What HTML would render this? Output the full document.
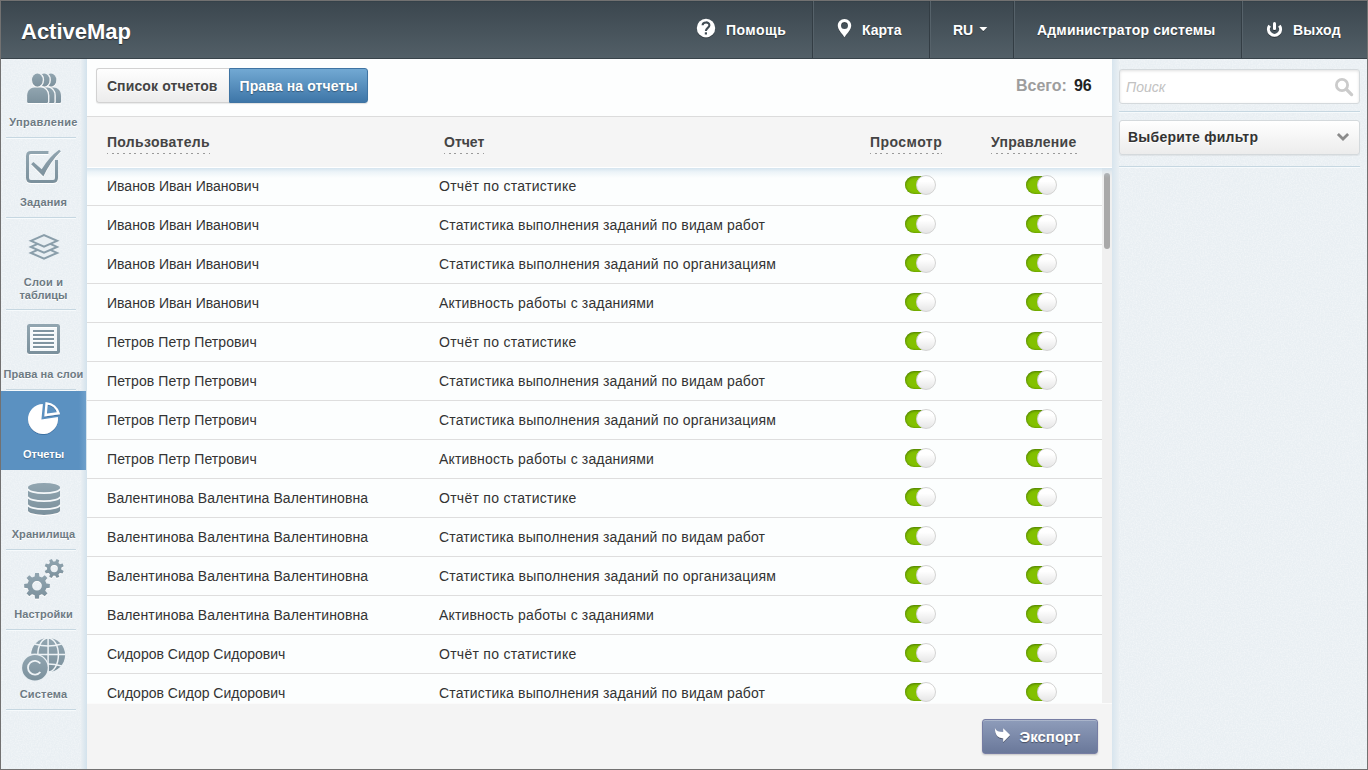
<!DOCTYPE html>
<html lang="ru">
<head>
<meta charset="utf-8">
<title>ActiveMap</title>
<style>
*{box-sizing:border-box;margin:0;padding:0}
html,body{width:1368px;height:770px;overflow:hidden;background:#727171;font-family:"Liberation Sans",sans-serif;}
#app{position:absolute;left:1px;top:1px;width:1366px;height:768px;overflow:hidden;background:#e9eff3}
.abs{position:absolute}
/* header */
#hdr{position:absolute;left:0;top:0;width:1366px;height:58px;background:linear-gradient(#3b464e,#525f67);border-bottom:1px solid #38434a;box-shadow:inset 0 1px 0 #36424a}
#logo{position:absolute;left:20px;top:18px;font-weight:bold;font-size:22px;line-height:26px;color:#fff;text-shadow:0 1px 1px rgba(0,0,0,.5);white-space:nowrap}
.nsep{position:absolute;top:0;width:2px;height:57px;border-left:1px solid #333d44;border-right:1px solid #56626a}
.ntx{position:absolute;top:20px;font-weight:bold;font-size:14px;line-height:18px;color:#fff;white-space:nowrap;text-shadow:0 1px 1px rgba(0,0,0,.4)}
/* sidebar */
#side{position:absolute;left:0;top:58px;width:86px;height:710px;background:linear-gradient(90deg,#e9eff3 0,#e9eff3 80px,#d3e2ec 86px)}
.sl{position:absolute;left:0;width:85px;text-align:center;font-weight:bold;font-size:11px;line-height:13px;color:#6d7a83;text-shadow:0 1px 0 #fff;letter-spacing:.35px;white-space:nowrap}
.ss{position:absolute;left:5px;width:70px;height:2px;border-top:1px solid #c6d7e1;border-bottom:1px solid #f6fafc}
#act{position:absolute;left:0;top:332px;width:85px;height:79px;background:linear-gradient(90deg,#5b91c1 0,#5b91c1 78px,#6ea0cb 85px)}
/* main */
#main{position:absolute;left:86px;top:58px;width:1025px;height:710px;background:#fdfefe}
#rp{position:absolute;left:1111px;top:58px;width:255px;height:710px;background:linear-gradient(90deg,#d8e5ee 0,#e9eff3 7px)}

/* tabs */
.tab{position:absolute;top:67px;height:35px;font-weight:bold;font-size:14px;line-height:35px;white-space:nowrap;text-align:center;letter-spacing:.12px}
#tab1{left:95px;width:133px;padding-right:1.5px;color:#444;background:linear-gradient(#fefefe,#ececec);border:1px solid #d2d2d2;border-right:0;border-radius:3px 0 0 3px;text-shadow:0 1px 0 #fff;box-shadow:0 1px 1px rgba(0,0,0,.08)}
#tab2{left:228px;width:139px;color:#fff;background:linear-gradient(#72a9d3,#3e76a8);border:1px solid #3f74a3;border-radius:0 3px 3px 0;text-shadow:0 1px 1px rgba(0,0,0,.35);box-shadow:0 1px 1px rgba(0,0,0,.12)}
#tot{position:absolute;top:75px;left:1015px;font-weight:bold;font-size:16px;line-height:20px;color:#9d9d9d;white-space:nowrap}
#tot b{color:#222;margin-left:7px}
/* table */
#thead{position:absolute;left:86px;top:115px;width:1025px;height:52px;border-top:1px solid #dcdcdc;background:#f5f5f5;border-bottom:1px solid #fff;z-index:3}
#tsh{position:absolute;left:86px;top:167px;width:1025px;height:10px;background:linear-gradient(rgba(200,220,234,.75),rgba(200,220,234,.3) 40%,rgba(200,220,234,0));z-index:3}
.th{position:absolute;top:132px;font-weight:bold;font-size:14px;line-height:18px;color:#444;white-space:nowrap;padding-bottom:3px;background:linear-gradient(#9a9a9a,#9a9a9a) 100% 100%/1px 1px no-repeat,repeating-linear-gradient(90deg,#9a9a9a 0,#9a9a9a 2px,transparent 2px,transparent 5.7px) -1px 100%/calc(100% + 1px) 1px no-repeat;z-index:4}
#rows{position:absolute;left:86px;top:166px;width:1015px;height:536px;overflow:hidden;background:#fcfefe}
.r{position:relative;height:39px;border-bottom:1px solid #dedede}
.r span{position:absolute;top:10px;font-size:14px;line-height:18px;color:#333;white-space:nowrap}
.r .u{left:20px}.r .p{left:352px}
.tg{position:absolute;top:8px;width:31px;height:20px}
.tg i{position:absolute;left:0;top:1px;width:30px;height:18px;border-radius:9px;background:#83c100;box-shadow:inset 0 1px 3px rgba(50,90,0,.6),inset 0 0 2px rgba(50,90,0,.45)}
.tg b{position:absolute;left:11px;top:0;width:20px;height:20px;border-radius:10px;border:1px solid #d4d4d4;background:linear-gradient(#fff 30%,#e6e6e6)}
.t1{left:818px}.t2{left:939px}
#strack{position:absolute;left:1101px;top:167px;width:10px;height:536px;background:#f0f0f0}
#sthumb{position:absolute;left:1103px;top:172px;width:6px;height:76px;border-radius:3px;background:#a9a9a9}
#foot{position:absolute;left:86px;top:702px;width:1025px;height:66px;background:#f4f4f4;border-top:1px solid #fbfbfb;z-index:3}
#exp{position:absolute;left:981px;top:718px;width:116px;height:35px;border:1px solid #767da3;border-radius:3px;background:linear-gradient(#8e9cba,#6a789a);box-shadow:inset 0 1px 0 rgba(255,255,255,.25),0 1px 2px rgba(0,0,0,.2);z-index:4}
#exp span{position:absolute;left:36.5px;top:6.5px;font-weight:bold;font-size:15px;line-height:19px;color:#fff;text-shadow:0 1px 1px rgba(0,0,0,.4);white-space:nowrap}
/* right panel */
.box{position:absolute;left:1118px;width:241px;height:35px;border:1px solid #d4d9dc;border-radius:3px}
#srch{top:68px;background:#fff;box-shadow:inset 0 1px 3px rgba(0,0,0,.12)}
#srch span{position:absolute;left:6px;top:8px;font-style:italic;font-size:14px;line-height:18px;color:#c2c2c2}
#flt{top:119px;background:linear-gradient(#fff,#ececec);box-shadow:0 1px 1px rgba(0,0,0,.06)}
#flt span{position:absolute;left:8px;top:7px;font-weight:bold;font-size:14px;line-height:18px;color:#333;text-shadow:0 1px 0 #fff;white-space:nowrap;letter-spacing:.23px}
.rs{position:absolute;left:1118px;width:241px;height:2px;border-top:1px solid #c6d7e1;border-bottom:1px solid #f6fafc}
.nz{position:absolute;filter:url(#nz);background:#fff;opacity:.45}
</style>
</head>
<body>
<div id="app">
<div id="hdr">
  <div id="logo">ActiveMap</div>

  <div class="nsep" style="left:811px"></div>
  <div class="nsep" style="left:928px"></div>
  <div class="nsep" style="left:1012px"></div>
  <div class="nsep" style="left:1240px"></div>
  <div class="ntx" style="left:725px;letter-spacing:.44px">Помощь</div>
  <div class="ntx" style="left:861px">Карта</div>
  <div class="ntx" style="left:952px">RU</div>
  <div class="ntx" style="left:1036px;letter-spacing:.18px">Администратор системы</div>
  <div class="ntx" style="left:1292px;letter-spacing:.2px">Выход</div>
</div>
<svg width="0" height="0" style="position:absolute"><filter id="nz" x="0" y="0" width="100%" height="100%"><feTurbulence type="fractalNoise" baseFrequency=".75" numOctaves="2" seed="3" result="t"/><feColorMatrix type="matrix" values="0 0 0 0 1  0 0 0 0 1  0 0 0 0 1  1.6 0 0 0 -.55"/></filter></svg>
<div id="side">
<div class="nz" style="left:0;top:0;width:80px;height:710px"></div>
<div id="act"></div>
<div class="sl" style="top:57px">Управление</div>
<div class="ss" style="top:78px"></div>
<div class="sl" style="top:137px;letter-spacing:0.15px">Задания</div>
<div class="ss" style="top:158px"></div>
<div class="sl" style="top:217px"><span style="letter-spacing:.2px">Слои и</span><br><span style="letter-spacing:.02px">таблицы</span></div>
<div class="ss" style="top:250px"></div>
<div class="sl" style="top:309px;letter-spacing:0.08px">Права на слои</div>
<div class="ss" style="top:330px"></div>
<div class="sl" style="top:389px;color:#fff;text-shadow:0 1px 1px rgba(0,0,0,.3);letter-spacing:0px">Отчеты</div>
<div class="sl" style="top:469px;letter-spacing:0.08px">Хранилища</div>
<div class="ss" style="top:490px"></div>
<div class="sl" style="top:549px;letter-spacing:0.04px">Настройки</div>
<div class="ss" style="top:570px"></div>
<div class="sl" style="top:629px;letter-spacing:0.18px">Система</div>
<div class="ss" style="top:650px"></div>
</div>
<div id="main"></div>
<div id="rp"></div>
<div class="nz" style="left:1118px;top:58px;width:248px;height:710px"></div>

<div id="tab1" class="tab">Список отчетов</div>
<div id="tab2" class="tab">Права на отчеты</div>
<div id="tot">Всего:<b>96</b></div>
<div id="thead"></div><div id="tsh"></div>
<div class="th" style="left:106px;letter-spacing:.3px">Пользователь</div>
<div class="th" style="left:443px">Отчет</div>
<div class="th" style="left:869px;letter-spacing:.45px">Просмотр</div>
<div class="th" style="left:990px;letter-spacing:.28px">Управление</div>
<div id="rows">
<div class="r"><span class="u">Иванов Иван Иванович</span><span class="p" style="letter-spacing:0.28px">Отчёт по статистике</span><div class="tg t1"><i></i><b></b></div><div class="tg t2"><i></i><b></b></div></div>
<div class="r"><span class="u">Иванов Иван Иванович</span><span class="p" style="letter-spacing:0.15px">Статистика выполнения заданий по видам работ</span><div class="tg t1"><i></i><b></b></div><div class="tg t2"><i></i><b></b></div></div>
<div class="r"><span class="u">Иванов Иван Иванович</span><span class="p" style="letter-spacing:0.195px">Статистика выполнения заданий по организациям</span><div class="tg t1"><i></i><b></b></div><div class="tg t2"><i></i><b></b></div></div>
<div class="r"><span class="u">Иванов Иван Иванович</span><span class="p" style="letter-spacing:0.155px">Активность работы с заданиями</span><div class="tg t1"><i></i><b></b></div><div class="tg t2"><i></i><b></b></div></div>
<div class="r"><span class="u" style="letter-spacing:0.09px">Петров Петр Петрович</span><span class="p" style="letter-spacing:0.28px">Отчёт по статистике</span><div class="tg t1"><i></i><b></b></div><div class="tg t2"><i></i><b></b></div></div>
<div class="r"><span class="u" style="letter-spacing:0.09px">Петров Петр Петрович</span><span class="p" style="letter-spacing:0.15px">Статистика выполнения заданий по видам работ</span><div class="tg t1"><i></i><b></b></div><div class="tg t2"><i></i><b></b></div></div>
<div class="r"><span class="u" style="letter-spacing:0.09px">Петров Петр Петрович</span><span class="p" style="letter-spacing:0.195px">Статистика выполнения заданий по организациям</span><div class="tg t1"><i></i><b></b></div><div class="tg t2"><i></i><b></b></div></div>
<div class="r"><span class="u" style="letter-spacing:0.09px">Петров Петр Петрович</span><span class="p" style="letter-spacing:0.155px">Активность работы с заданиями</span><div class="tg t1"><i></i><b></b></div><div class="tg t2"><i></i><b></b></div></div>
<div class="r"><span class="u" style="letter-spacing:0.11px">Валентинова Валентина Валентиновна</span><span class="p" style="letter-spacing:0.28px">Отчёт по статистике</span><div class="tg t1"><i></i><b></b></div><div class="tg t2"><i></i><b></b></div></div>
<div class="r"><span class="u" style="letter-spacing:0.11px">Валентинова Валентина Валентиновна</span><span class="p" style="letter-spacing:0.15px">Статистика выполнения заданий по видам работ</span><div class="tg t1"><i></i><b></b></div><div class="tg t2"><i></i><b></b></div></div>
<div class="r"><span class="u" style="letter-spacing:0.11px">Валентинова Валентина Валентиновна</span><span class="p" style="letter-spacing:0.195px">Статистика выполнения заданий по организациям</span><div class="tg t1"><i></i><b></b></div><div class="tg t2"><i></i><b></b></div></div>
<div class="r"><span class="u" style="letter-spacing:0.11px">Валентинова Валентина Валентиновна</span><span class="p" style="letter-spacing:0.155px">Активность работы с заданиями</span><div class="tg t1"><i></i><b></b></div><div class="tg t2"><i></i><b></b></div></div>
<div class="r"><span class="u">Сидоров Сидор Сидорович</span><span class="p" style="letter-spacing:0.28px">Отчёт по статистике</span><div class="tg t1"><i></i><b></b></div><div class="tg t2"><i></i><b></b></div></div>
<div class="r"><span class="u">Сидоров Сидор Сидорович</span><span class="p" style="letter-spacing:0.15px">Статистика выполнения заданий по видам работ</span><div class="tg t1"><i></i><b></b></div><div class="tg t2"><i></i><b></b></div></div>
</div>
<div id="strack"></div><div id="sthumb"></div>
<div id="foot"></div>
<div id="exp"><span>Экспорт</span></div>
<div id="srch" class="box"><span>Поиск</span></div>
<div class="rs" style="top:110px"></div>
<div id="flt" class="box"><span>Выберите фильтр</span></div>
<div class="rs" style="top:165px"></div>
<svg id="ico" width="1366" height="768" viewBox="1 1 1366 768" style="position:absolute;left:0;top:0;z-index:6;pointer-events:none">
<defs><linearGradient id="ig" x1="0" y1="0" x2="0" y2="1"><stop offset="0" stop-color="#91a5b0"/><stop offset="1" stop-color="#7c919d"/></linearGradient><filter id="ws" x="-10%" y="-10%" width="120%" height="130%"><feDropShadow dx="0" dy="1" stdDeviation="0" flood-color="#fff" flood-opacity="1"/></filter><filter id="ds" x="-10%" y="-10%" width="120%" height="130%"><feDropShadow dx="0" dy="1" stdDeviation="0.4" flood-color="#2f6597" flood-opacity=".7"/></filter><filter id="hs" x="-10%" y="-10%" width="120%" height="130%"><feDropShadow dx="0" dy="1" stdDeviation="0.5" flood-color="#000" flood-opacity=".45"/></filter></defs>
<g filter="url(#hs)">
<circle cx="706" cy="28" r="9.2" fill="#fff"/>
</g>
<path d="M702.6 25.2 C702.6 21.6 709.4 21.4 709.4 25.2 C709.4 27.8 705.9 27.9 705.9 30.9" fill="none" stroke="#414c54" stroke-width="2.1"/><rect x="704.8" y="32.3" width="2.2" height="2.2" fill="#414c54"/>
<g filter="url(#hs)" fill="#fff">
<path fill-rule="evenodd" d="M844.5 19 C848.3 19 851.2 22 851.2 25.6 C851.2 29.6 846.8 33.5 844.5 37.3 C842.2 33.5 837.8 29.6 837.8 25.6 C837.8 22 840.7 19 844.5 19 Z M844.5 22 A3.5 3.5 0 1 0 844.5 29 A3.5 3.5 0 1 0 844.5 22 Z"/>
<path d="M979.3 27 L987.3 27 L983.3 31 Z"/>
<path d="M1269.6 25.6 A6.05 6.05 0 1 0 1279.4 25.6" fill="none" stroke="#fff" stroke-width="3"/>
<rect x="1273" y="22" width="3" height="8" rx="1.5"/>
</g>
<g fill="none" stroke="#cbcbcb"><circle cx="1342" cy="85" r="5.6" stroke-width="2.8"/><path d="M1346.4 89.4 L1351.6 94.6" stroke-width="3.3" stroke-linecap="round"/></g>
<path d="M1337.9 134 L1343 139 L1348.1 134" fill="none" stroke="#8b8b8b" stroke-width="2.8"/>
<path filter="url(#hs)" fill="#fff" d="M994.9 728 C996 731 999 732 1003.2 732 L1003.2 728.2 L1010.1 735 L1003.2 742 L1003.2 738.2 C998 738.2 995 735 994.9 728 Z"/>
<g fill="url(#ig)" filter="url(#ws)">
<mask id="m2" maskUnits="userSpaceOnUse" x="0" y="0" width="100" height="200"><rect x="0" y="0" width="100" height="200" fill="#fff"/><g fill="#000" stroke="#000" stroke-width="2.6"><ellipse cx="44.16" cy="80.1" rx="5.45" ry="6.6"/><path d="M33.6 101.9 L33.6 95.60000000000001 C33.6 90.4 37.2 87.4 41.0 87.4 L47.1 87.4 C50.9 87.4 54.5 90.4 54.5 95.60000000000001 L54.5 101.9 Q54.5 102.9 53.5 102.9 L34.6 102.9 Q33.6 102.9 33.6 101.9 Z"/></g></mask>
<mask id="m1" maskUnits="userSpaceOnUse" x="0" y="0" width="100" height="200"><rect x="0" y="0" width="100" height="200" fill="#fff"/><g fill="#000" stroke="#000" stroke-width="2.6"><ellipse cx="37.4" cy="80.1" rx="5.45" ry="6.6"/><path d="M27.1 101.9 L27.1 95.60000000000001 C27.1 90.4 30.700000000000003 87.4 34.5 87.4 L40.6 87.4 C44.4 87.4 48 90.4 48 95.60000000000001 L48 101.9 Q48 102.9 47 102.9 L28.1 102.9 Q27.1 102.9 27.1 101.9 Z"/></g></mask>
<g mask="url(#m2)"><ellipse cx="50.92" cy="80.1" rx="5.45" ry="6.6"/><path d="M40.1 101.9 L40.1 95.60000000000001 C40.1 90.4 43.7 87.4 47.5 87.4 L53.6 87.4 C57.4 87.4 61 90.4 61 95.60000000000001 L61 101.9 Q61 102.9 60 102.9 L41.1 102.9 Q40.1 102.9 40.1 101.9 Z"/></g><g mask="url(#m1)"><ellipse cx="44.16" cy="80.1" rx="5.45" ry="6.6"/><path d="M33.6 101.9 L33.6 95.60000000000001 C33.6 90.4 37.2 87.4 41.0 87.4 L47.1 87.4 C50.9 87.4 54.5 90.4 54.5 95.60000000000001 L54.5 101.9 Q54.5 102.9 53.5 102.9 L34.6 102.9 Q33.6 102.9 33.6 101.9 Z"/></g><g><ellipse cx="37.4" cy="80.1" rx="5.45" ry="6.6"/><path d="M27.1 101.9 L27.1 95.60000000000001 C27.1 90.4 30.700000000000003 87.4 34.5 87.4 L40.6 87.4 C44.4 87.4 48 90.4 48 95.60000000000001 L48 101.9 Q48 102.9 47 102.9 L28.1 102.9 Q27.1 102.9 27.1 101.9 Z"/></g>
</g>
<g fill="url(#ig)" filter="url(#ws)">
<path d="M48.5 152.4 L31 152.4 Q27.5 152.4 27.5 155.9 L27.5 178.1 Q27.5 181.6 31 181.6 L53 181.6 Q56.5 181.6 56.5 178.1 L56.5 160" fill="none" stroke="url(#ig)" stroke-width="3"/>
<path d="M31.1 164.3 L33.4 162 L41.7 169.2 Q49 157 59.1 149.7 L60.9 151.2 Q50 162 43.4 176.6 Z"/>
</g>
<g fill="#e9eff3" stroke="#8a9eaa" stroke-width="2" stroke-linejoin="miter">
<path d="M30.9 252.9 L44 247.1 L57.1 252.9 L44 258.7 Z"/>
<path d="M30.9 246.9 L44 241.1 L57.1 246.9 L44 252.70000000000002 Z"/>
<path d="M30.9 240.8 L44 235.0 L57.1 240.8 L44 246.60000000000002 Z"/>
</g>
<rect x="29" y="326" width="29" height="26" fill="#f4f8fa"/><g filter="url(#ws)"><rect x="28.5" y="325.5" width="30" height="27" rx="1" fill="none" stroke="url(#ig)" stroke-width="3"/>
<rect x="33" y="330" width="21" height="2" fill="#8095a1"/>
<rect x="33" y="334" width="21" height="2" fill="#8095a1"/>
<rect x="33" y="338" width="21" height="2" fill="#8095a1"/>
<rect x="33" y="342" width="21" height="2" fill="#8095a1"/>
<rect x="33" y="346" width="21" height="2" fill="#8095a1"/>
</g>
<g filter="url(#ds)">
<path fill="#fff" d="M41.4 419.4 L42.9 404 A15 15 0 1 0 57.9 417 Z"/>
<path fill="none" stroke="#fff" stroke-width="2.4" stroke-linejoin="miter" d="M45.6 415 L46.6 403.4 A13.6 13.6 0 0 1 58.5 413.2 Z"/>
</g>
<g filter="url(#ws)"><path fill="url(#ig)" d="M28 487.3 A16 4.4 0 0 1 60 487.3 L60 510.5 A16 4.4 0 0 1 28 510.5 Z"/></g>
<path d="M28 488.7 A16 4.4 0 0 0 60 488.7" fill="none" stroke="#f5f8fa" stroke-width="1.8"/>
<path d="M28 496.7 A16 4.4 0 0 0 60 496.7" fill="none" stroke="#f5f8fa" stroke-width="1.8"/>
<path d="M28 504.7 A16 4.4 0 0 0 60 504.7" fill="none" stroke="#f5f8fa" stroke-width="1.8"/>
<g fill="url(#ig)" fill-rule="evenodd" filter="url(#ws)">
<path d="M34.60 576.40 L35.10 572.94 L38.90 572.94 L39.40 576.40 L41.95 577.46 L44.75 575.36 L47.44 578.05 L45.34 580.85 L46.40 583.40 L49.86 583.90 L49.86 587.70 L46.40 588.20 L45.34 590.75 L47.44 593.55 L44.75 596.24 L41.95 594.14 L39.40 595.20 L38.90 598.66 L35.10 598.66 L34.60 595.20 L32.05 594.14 L29.25 596.24 L26.56 593.55 L28.66 590.75 L27.60 588.20 L24.14 587.70 L24.14 583.90 L27.60 583.40 L28.66 580.85 L26.56 578.05 L29.25 575.36 L32.05 577.46 Z M32.20 585.80 A4.8 4.8 0 1 0 41.80 585.80 A4.8 4.8 0 1 0 32.20 585.80 Z"/>
<path d="M55.15 561.46 L56.62 559.10 L59.21 560.17 L58.57 562.88 L59.92 564.23 L62.63 563.59 L63.70 566.18 L61.34 567.65 L61.34 569.55 L63.70 571.02 L62.63 573.61 L59.92 572.97 L58.57 574.32 L59.21 577.03 L56.62 578.10 L55.15 575.74 L53.25 575.74 L51.78 578.10 L49.19 577.03 L49.83 574.32 L48.48 572.97 L45.77 573.61 L44.70 571.02 L47.06 569.55 L47.06 567.65 L44.70 566.18 L45.77 563.59 L48.48 564.23 L49.83 562.88 L49.19 560.17 L51.78 559.10 L53.25 561.46 Z M50.60 568.60 A3.6 3.6 0 1 0 57.80 568.60 A3.6 3.6 0 1 0 50.60 568.60 Z"/>
</g>
<g><circle cx="48.1" cy="655" r="17" fill="url(#ig)"/>
<g fill="none" stroke="#eef3f6" stroke-width="1.5"><path d="M48.1 638 L48.1 672"/><path d="M31 654.6 L65.2 654.6"/><ellipse cx="48.1" cy="655" rx="10.3" ry="17"/><path d="M34.5 644 Q48.1 648 61.7 644"/><path d="M34.5 666 Q48.1 662 61.7 666"/></g>
<circle cx="34.9" cy="667.7" r="13.9" fill="#e9eff3"/><circle cx="34.9" cy="667.7" r="12.8" fill="url(#ig)"/>
<path d="M40.34 663.45 A6.9 6.9 0 1 0 40.34 671.95" fill="none" stroke="#eef3f6" stroke-width="1.8"/>
</g>
</svg>
</div>
</body>
</html>
